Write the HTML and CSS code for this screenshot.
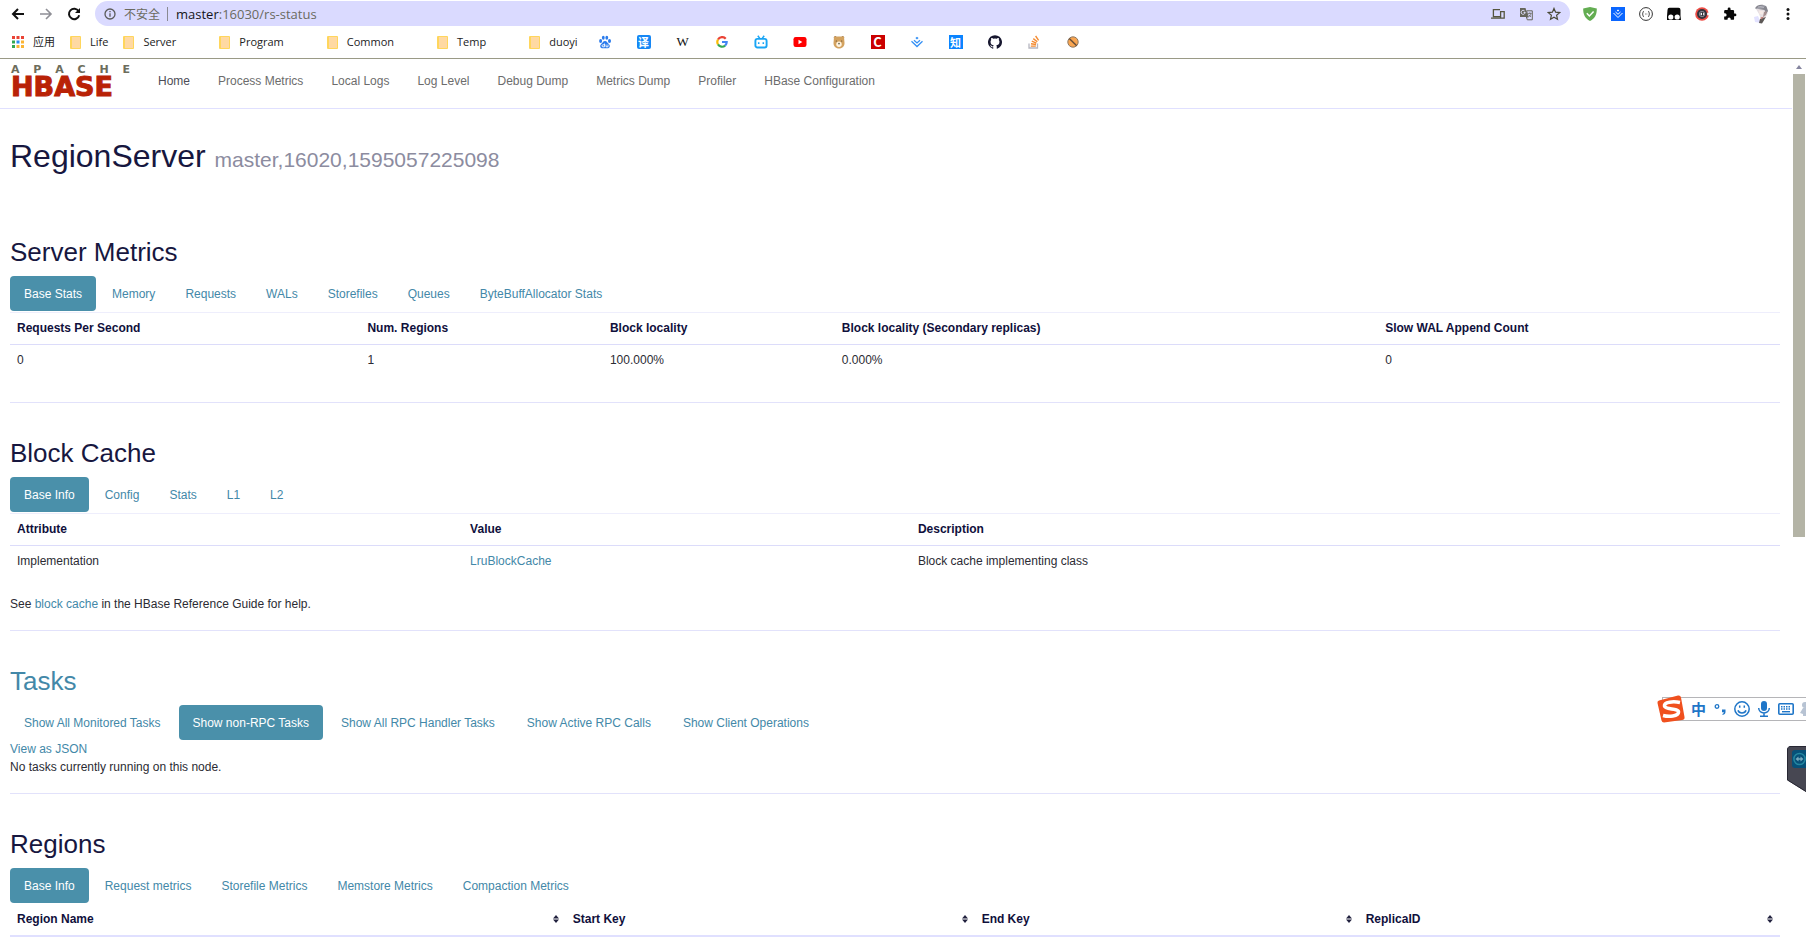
FILE: index.html
```html
<!DOCTYPE html>
<html lang="en">
<head>
<meta charset="utf-8">
<title>HBase Region Server: master</title>
<link rel="stylesheet" href="styles.css">
</head>
<body>
<header class="browser">
  <div class="toolbar">
    <button class="tool" aria-label="Back"><svg width="14" height="14" viewBox="0 0 14 14" fill="none" stroke="#111" stroke-width="2"><path d="M13 7H2M7 2L2 7l5 5"/></svg></button>
    <button class="tool" aria-label="Forward"><svg width="14" height="14" viewBox="0 0 14 14" fill="none" stroke="#8f8f96" stroke-width="1.6"><path d="M1 7h11M7 2l5 5-5 5"/></svg></button>
    <button class="tool" aria-label="Reload"><svg width="14" height="14" viewBox="0 0 14 14" fill="none" stroke="#111" stroke-width="2"><path d="M11.6 4.2A5.2 5.2 0 1 0 12.2 8.3"/><path d="M13 1v5H8z" fill="#111" stroke="none"/></svg></button>
    <div class="address">
      <svg width="12" height="12" viewBox="0 0 12 12" fill="none" stroke="#5b5b5b" stroke-width="1.3"><circle cx="6" cy="6" r="5"/><path d="M6 5.3v3.4M6 3v1.3"/></svg>
      <span class="warning" lang="zh">不安全</span>
      <span class="bar"></span>
      <span class="url"><b class="host">master</b>:16030/rs-status</span>
      <span class="address-tools">
        <svg width="14" height="12" viewBox="0 0 14 12" fill="none" stroke="#55553f" stroke-width="1.3"><path d="M9 1.6H2.4v7H9M0 10.2h9M9.6 3.6h3.6v6.6H9.6z"/></svg>
        <svg width="14" height="14" viewBox="0 0 14 14"><path d="M1 1h5.5l2.6 9H1z" fill="#66665c"/><path d="M7.6 3.8h5.7v9H8.3L7.4 10h1.8z" fill="#dadaff" stroke="#66665c"/><path d="M6.3 5.4H4.6M6.1 5.4A2 2 0 1 1 5.6 4" fill="none" stroke="#e4e4ff"/><path d="M9 6.4h3.6M10.8 5.4v1M12 6.4c-.4 1.7-1.3 2.8-2.4 3.6M9.9 7.7l2 2.3" stroke="#66665c" stroke-width=".8" fill="none"/></svg>
        <svg width="14" height="14" viewBox="0 0 14 14" fill="none" stroke="#4a4a38" stroke-width="1.2"><path d="M7 1.4l1.6 3.8 4.1.4-3.1 2.7.9 4L7 10.2l-3.5 2.1.9-4L1.300 5.600l4.100-.4z"/></svg>
      </span>
    </div>
    <div class="extensions">
      <svg width="14" height="14" viewBox="0 0 14 14"><path d="M7 0l6.800 1.400C14 7 12 11.500 7 14 2 11.500 0 7 .2 1.400z" fill="#63ad52"/><path d="M3.800 6.300l2.600 2.700 4.200-4.500" fill="none" stroke="#fff" stroke-width="1.500"/></svg>
      <svg width="14" height="14" viewBox="0 0 14 14"><path d="M0 0h14v14H0z" fill="#0a66ff"/><path d="M2.500 6L7 10.500 11.500 6M4.500 5L7 7.300 9.500 5" fill="none" stroke="#fff"/><path d="M7 2.600l1.200 1L7 4.600l-1.200-1z" fill="#fff"/></svg>
      <svg width="14" height="14" viewBox="0 0 14 14" fill="none" stroke="#333"><circle cx="7" cy="7" r="6.400"/><path d="M4.800 4.300c-1.200 0-.5 2.200-1.500 2.700 1 .5.300 2.700 1.500 2.700M9.200 4.300c1.200 0 .5 2.200 1.500 2.700-1 .5-.3 2.700-1.500 2.700M6 7h.6M7.600 7h.6"/></svg>
      <svg width="14" height="14" viewBox="0 0 14 14"><path d="M2.500.8h9Q13.500.8 13.500 3v6l.5 4H0V9L.5 3Q.5.800 2.500.8z" fill="#080808"/><circle cx="3.800" cy="10" r="2.600" fill="#fff"/><circle cx="10.200" cy="10" r="2.600" fill="#fff"/></svg>
      <svg width="14" height="14" viewBox="0 0 14 14"><circle cx="7" cy="7" r="6.800" fill="#ed4c45"/><circle cx="7" cy="7" r="5" fill="#33333c"/><circle cx="7" cy="7" r="2.700" fill="#33333c" stroke="#9b9ba6" stroke-width=".8"/><path d="M12.200 5.800H14v2.400h-1.800z" fill="#fff"/><path d="M5 7l2-1.500v3zM8 5.500L9.300 7 8 8.500z" fill="#fff"/></svg>
      <svg width="14" height="14" viewBox="0 0 24 24" fill="#080808"><path d="M20.500 11H19V7a2 2 0 0 0-2-2h-4V3.500a2.500 2.500 0 0 0-5 0V5H4a2 2 0 0 0-2 2v3.800h1.500a2.700 2.700 0 0 1 0 5.400H2V20a2 2 0 0 0 2 2h3.800v-1.500a2.700 2.700 0 0 1 5.400 0V22H17a2 2 0 0 0 2-2v-4h1.500a2.500 2.500 0 0 0 0-5z"/></svg>
      <svg class="avatar" width="16" height="20" viewBox="0 0 16 20"><path d="M2 5c1-3 7-3 10-1 2 2 2 5 1 7l-2 3-4 1-2-5z" fill="#e6dfe2"/><path d="M1 4.500C2 .5 9-.5 12.500 2.500L14 7l-2 3-1.500-4L3 4.800z" fill="#85858e"/><path d="M4 3l7-1.300M3 4.300l7-.8" stroke="#c8c8d2" stroke-width=".7"/><path d="M5 6.500l4.500.7L9 10.500 5.500 10z" fill="#f6eae6"/><path d="M10 8l3-1-1 4-3 2z" fill="#a58f8f"/><path d="M0 13l4-1 3 7-6-1z" fill="#e2e2ff"/><path d="M6 15l6-2-4 6.500L5 19z" fill="#5d5856"/><path d="M6.500 13.500l4-1-3.500 3z" fill="#c07a74"/></svg>
      <svg class="more" width="4" height="14" viewBox="0 0 4 14" fill="#111"><circle cx="2" cy="2.500" r="1.500"/><circle cx="2" cy="7" r="1.500"/><circle cx="2" cy="11.500" r="1.500"/></svg>
    </div>
  </div>
  <nav class="bookmarks" aria-label="Bookmarks">
    <a href="#" class="bookmark"><svg width="12" height="12" viewBox="0 0 12 12"><path d="M0 0h3v3H0zM4.500 0h3v3h-3zM9 0h3v3H9z" fill="#ea4335"/><path d="M0 4.500h3v3H0z" fill="#34a853"/><path d="M4.500 4.500h3v3h-3z" fill="#2b8cf5"/><path d="M9 4.500h3v3H9zM9 9h3v3H9zM4.500 9h3v3h-3z" fill="#fbb535"/><path d="M0 9h3v3H0z" fill="#34a853"/></svg><span lang="zh">应用</span></a>
    <a href="#" class="bookmark"><i class="folder"></i>Life</a>
    <a href="#" class="bookmark spaced"><i class="folder"></i>Server</a>
    <a href="#" class="bookmark spaced"><i class="folder"></i>Program</a>
    <a href="#" class="bookmark spaced"><i class="folder"></i>Common</a>
    <a href="#" class="bookmark spaced"><i class="folder"></i>Temp</a>
    <a href="#" class="bookmark"><i class="folder"></i>duoyi</a>
    <span class="sites">
      <a href="#" aria-label="Baidu"><svg width="14" height="14" viewBox="0 0 14 14" fill="#2b7bec"><ellipse cx="2.600" cy="6" rx="1.500" ry="2"/><ellipse cx="5.300" cy="2.800" rx="1.400" ry="2"/><ellipse cx="8.800" cy="2.800" rx="1.400" ry="2"/><ellipse cx="11.500" cy="6" rx="1.500" ry="2"/><path d="M7 6c2 0 2.500 2 4 3.200 1.600 1.600.7 4-1.500 4-1.600 0-3.400 0-5 0-2.200 0-3-2.400-1.500-4C4.500 8 5 6 7 6z"/><path d="M6.500 8.500v3.300H5a1 1 0 0 1 0-2h1.500M8 9.500v2.300h2V9.500" fill="none" stroke="#fff" stroke-width=".9"/></svg></a>
      <a href="#" aria-label="Translate" class="tile tile-blue"><span lang="zh">译</span></a>
      <a href="#" aria-label="Wikipedia" class="wiki">W</a>
      <a href="#" aria-label="Google"><svg width="12" height="12" viewBox="0 0 12 12" fill="none" stroke-width="2.200"><path d="M9.700 2.700A4.700 4.700 0 0 0 2 3.600" stroke="#ea4335"/><path d="M2 3.600a4.700 4.700 0 0 0 0 4.800" stroke="#fbbc05"/><path d="M2 8.400a4.700 4.700 0 0 0 7.100 1.200" stroke="#34a853"/><path d="M9.100 9.600A4.700 4.700 0 0 0 10.700 6H6" stroke="#4285f4"/></svg></a>
      <a href="#" aria-label="Bilibili"><svg width="14" height="14" viewBox="0 0 14 14" fill="none" stroke="#19a5f5" stroke-width="1.900"><rect x="1.400" y="3.900" width="11.200" height="8.600" rx="2"/><path d="M3.800.8l2 2.600M10.200.8l-2 2.600M4.700 7.200v1.800M9.300 7.200v1.800" stroke-width="1.500"/></svg></a>
      <a href="#" aria-label="YouTube"><svg width="14" height="12" viewBox="0 0 14 12"><rect x=".5" y="1" width="13" height="10" rx="2.200" fill="#f00"/><path d="M5.500 3.800v4.400L9.300 6z" fill="#fff"/></svg></a>
      <a href="#" aria-label="Bear"><svg width="12" height="14" viewBox="0 0 12 14"><circle cx="2.300" cy="2.500" r="1.500" fill="#a77b48"/><circle cx="9.700" cy="2.500" r="1.500" fill="#a77b48"/><path d="M1 2c2-.8 8-.8 10 0l.5 6c0 4-3 5.500-5.500 5.500S.5 12 .5 8z" fill="#d3a25f"/><circle cx="6" cy="9.300" r="2.700" fill="#fff3df"/><circle cx="6" cy="8.600" r=".9" fill="#665"/><circle cx="3.300" cy="6" r=".6" fill="#543"/><circle cx="8.700" cy="6" r=".6" fill="#543"/></svg></a>
      <a href="#" aria-label="CSDN" class="tile tile-red">C</a>
      <a href="#" aria-label="Juejin"><svg width="12" height="12" viewBox="0 0 12 12" fill="none" stroke="#3490f5" stroke-width="1.300"><path d="M.5 5.300L6 10.500l5.500-5.200M3 4.300L6 7l3-2.700"/><path d="M6 .7l1.600 1.300L6 3.400 4.400 2z" fill="#3490f5" stroke="none"/></svg></a>
      <a href="#" aria-label="Zhihu" class="tile tile-square"><span lang="zh">知</span></a>
      <a href="#" aria-label="GitHub"><svg width="14" height="14" viewBox="0 0 16 16" fill="#17172f"><path d="M8 .2a8 8 0 0 0-2.500 15.600c.4.100.5-.2.500-.4v-1.500c-2.200.5-2.700-.9-2.700-.9-.4-.9-.9-1.200-.9-1.200-.7-.5.100-.5.100-.5.800.1 1.200.8 1.200.8.700 1.300 1.900.9 2.300.7.100-.5.300-.9.500-1.100-1.800-.2-3.600-.9-3.600-4 0-.9.300-1.600.8-2.100-.1-.2-.4-1 .1-2.100 0 0 .7-.2 2.200.8a7.600 7.600 0 0 1 4 0c1.500-1 2.200-.8 2.200-.8.500 1.100.2 1.900.1 2.100.5.500.8 1.200.8 2.100 0 3.100-1.900 3.800-3.700 4 .3.200.6.700.6 1.500v2.200c0 .2.100.5.500.4A8 8 0 0 0 8 .2z"/></svg></a>
      <a href="#" aria-label="Stack Overflow"><svg width="12" height="14" viewBox="0 0 12 14" fill="none"><path d="M1 8.500V13h8.500V8.500" stroke="#b6b6c0" stroke-width="1.300"/><path d="M2.800 11.100h5M3 8.800l5 .7M3.800 6.200l4.600 1.900M5.300 3.600l4 3.100M7.600 1l3 4.300" stroke="#f48b31" stroke-width="1.400"/></svg></a>
      <a href="#" aria-label="Blocked"><svg width="12" height="14" viewBox="0 0 12 14"><circle cx="6" cy="7" r="5.200" fill="#f9a550" stroke="#8e7963"/><path d="M2.300 3.400l7.400 7.400" stroke="#654d39" stroke-width="1.400"/></svg></a>
    </span>
  </nav>
</header>

<div class="viewport">
  <div class="page">
    <nav class="navbar">
      <a href="#" class="logo" aria-label="Apache HBase">
        <span class="logo-top"><i>A</i><i>P</i><i>A</i><i>C</i><i>H</i><i>E</i></span>
        <span class="logo-name">HBASE</span>
      </a>
      <a href="#" class="current">Home</a>
      <a href="#">Process Metrics</a>
      <a href="#">Local Logs</a>
      <a href="#">Log Level</a>
      <a href="#">Debug Dump</a>
      <a href="#">Metrics Dump</a>
      <a href="#">Profiler</a>
      <a href="#">HBase Configuration</a>
    </nav>

    <main class="content">
      <h1>RegionServer <small>master,16020,1595057225098</small></h1>

      <section class="metrics">
        <h2>Server Metrics</h2>
        <nav class="tabs">
          <a href="#" class="active">Base Stats</a><a href="#">Memory</a><a href="#">Requests</a><a href="#">WALs</a><a href="#">Storefiles</a><a href="#">Queues</a><a href="#">ByteBuffAllocator Stats</a>
        </nav>
        <table class="server-table">
          <thead><tr><th class="c-requests">Requests Per Second</th><th class="c-regions">Num. Regions</th><th class="c-locality">Block locality</th><th class="c-secondary">Block locality (Secondary replicas)</th><th>Slow WAL Append Count</th></tr></thead>
          <tbody><tr><td>0</td><td>1</td><td>100.000%</td><td>0.000%</td><td>0</td></tr></tbody>
        </table>
      </section>

      <section>
        <h2>Block Cache</h2>
        <nav class="tabs">
          <a href="#" class="active">Base Info</a><a href="#">Config</a><a href="#">Stats</a><a href="#">L1</a><a href="#">L2</a>
        </nav>
        <table>
          <thead><tr><th class="c-attribute">Attribute</th><th class="c-value">Value</th><th>Description</th></tr></thead>
          <tbody><tr><td>Implementation</td><td><a href="#">LruBlockCache</a></td><td>Block cache implementing class</td></tr></tbody>
        </table>
        <p class="help">See <a href="#">block cache</a> in the HBase Reference Guide for help.</p>
      </section>

      <section>
        <h2><a href="#">Tasks</a></h2>
        <nav class="tabs tabs-wide">
          <a href="#">Show All Monitored Tasks</a><a href="#" class="active">Show non-RPC Tasks</a><a href="#">Show All RPC Handler Tasks</a><a href="#">Show Active RPC Calls</a><a href="#">Show Client Operations</a>
        </nav>
        <p><a href="#">View as JSON</a></p>
        <p>No tasks currently running on this node.</p>
      </section>

      <section>
        <h2>Regions</h2>
        <nav class="tabs">
          <a href="#" class="active">Base Info</a><a href="#">Request metrics</a><a href="#">Storefile Metrics</a><a href="#">Memstore Metrics</a><a href="#">Compaction Metrics</a>
        </nav>
        <table class="sortable">
          <thead><tr>
            <th class="c-name"><span class="sort">Region Name<svg width="6" height="8" viewBox="0 0 6 8"><path d="M0 3.400L3 0l3 3.400zM0 4.600h6L3 8z"/></svg></span></th>
            <th class="c-start"><span class="sort">Start Key<svg width="6" height="8" viewBox="0 0 6 8"><path d="M0 3.400L3 0l3 3.400zM0 4.600h6L3 8z"/></svg></span></th>
            <th class="c-end"><span class="sort">End Key<svg width="6" height="8" viewBox="0 0 6 8"><path d="M0 3.400L3 0l3 3.400zM0 4.600h6L3 8z"/></svg></span></th>
            <th><span class="sort">ReplicaID<svg width="6" height="8" viewBox="0 0 6 8"><path d="M0 3.400L3 0l3 3.400zM0 4.600h6L3 8z"/></svg></span></th>
          </tr></thead>
        </table>
      </section>
    </main>
  </div>
  <div class="scrollbar"><span class="scroll-arrow"></span><span class="thumb"></span></div>
</div>

<div class="ime">
  <svg class="ime-logo" width="28" height="28" viewBox="0 0 28 28"><path d="M2 5.500Q0 6 .5 8l4 17.500q.5 2 2.500 2l18-2.500q3-.5 2.500-3L24 2.500Q23.500 0 21 .5z" fill="#f0501e"/><path d="M23 7.500C16 6 7 7 7.500 11c.5 4 14 2 14 6 0 4.500-10 5-15.500 3.500" fill="none" stroke="#fff" stroke-width="3.600"/></svg>
  <span class="ime-mode" lang="zh">中</span>
  <svg width="16" height="16" viewBox="0 0 16 16"><circle cx="5" cy="5.500" r="1.800" fill="none" stroke="#1f76c8" stroke-width="1.300"/><path d="M10 8.500h3.500V11c0 1.500-1 2.500-3 3v-1c1-.5 1.300-1 1.300-1.700H10z" fill="#1f76c8"/></svg>
  <svg width="16" height="16" viewBox="0 0 16 16" fill="none" stroke="#1f76c8" stroke-width="1.500"><circle cx="8" cy="8" r="7.200"/><path d="M5.700 4.500v2.300M10.300 4.500v2.300M4 9.300c1 3.600 7 3.600 8 0"/></svg>
  <svg width="16" height="16" viewBox="0 0 16 16"><rect x="5" y="0" width="6" height="10" rx="3" fill="#1f76c8"/><path d="M2.700 7c0 6.500 10.600 6.500 10.600 0M8 12v3.200M4 15.200h8" fill="none" stroke="#1f76c8" stroke-width="1.500"/></svg>
  <svg width="16" height="16" viewBox="0 0 16 16" fill="none" stroke="#1f76c8"><rect x=".8" y="2.800" width="14.400" height="10.400" rx="1" stroke-width="1.600"/><path d="M3 5.700h10M3 8h10" stroke-width="1.400" stroke-dasharray="1.500 1"/><path d="M4 10.700h8" stroke-width="1.400"/></svg>
  <svg width="16" height="16" viewBox="0 0 16 16" fill="#b7c3d3"><circle cx="5" cy="4" r="3"/><path d="M3 7h8v8H3v-2L0 12z"/></svg>
</div>
<div class="remote">
  <svg width="19" height="46" viewBox="0 0 19 46"><path d="M3 0h16v46L0 34V3z" fill="#474752"/><path d="M19 45.500L.5 34V3Q1 .5 3 .5h16" fill="none" stroke="#272733"/><rect x="5" y="4" width="16" height="18" rx="3" fill="#075078"/><circle cx="12.500" cy="13" r="5.600" fill="none" stroke="#2587a0" stroke-width="1.500"/><path d="M8.500 13l3-2.500v1.700h2v-1.700l3 2.500-3 2.500v-1.700h-2v1.700z" fill="#77a9bd"/></svg>
</div>
</body>
</html>
```
FILE: styles.css
```css
* { box-sizing: border-box; }

body {
  margin: 0;
  height: 100vh;
  overflow: hidden;
  display: flex;
  flex-direction: column;
  background: #fff;
  color: #2b2b33;
  font: 12px/18px "Liberation Sans", Arial, sans-serif;
}

a { color: #4388a8; text-decoration: none; }
svg { display: block; flex: none; }
h1, h2, p { margin: 0; font-weight: 400; }

/* Browser frame */
.browser {
  border-bottom: 1px solid #9a9a86;
  font-family: "Open Sans", "Noto Sans CJK SC", sans-serif;
  color: #222;
}
.toolbar { display: flex; align-items: center; height: 27px; padding-left: 11px; }
.tool {
  display: flex;
  margin: 0 14px 0 0;
  padding: 0;
  border: 0;
  background: none;
}
.address {
  flex: 1;
  display: flex;
  align-items: center;
  height: 25px;
  padding: 0 9px 0 9px;
  border-radius: 13px;
  background: #dadaff;
  color: #6a6a60;
  font-size: 12px;
}
.warning { margin-left: 8px; font-family: "Noto Sans CJK SC", sans-serif; }
.bar { width: 1px; height: 14px; margin: 0 8px 0 7px; background: #8a8a92; }
.url { font-size: 13px; }
.host { color: #151520; font-weight: 400; }
.address-tools { display: flex; align-items: center; gap: 14px; margin-left: auto; }
.extensions { display: flex; align-items: center; gap: 14px; padding: 0 16px 0 13px; }
.avatar { margin-left: 3px; }
.more { margin-left: 2px; }

.bookmarks {
  display: flex;
  align-items: center;
  height: 31px;
  padding: 0 0 1px 12px;
  font-size: 11px;
}
.bookmark {
  display: flex;
  align-items: center;
  gap: 9px;
  margin-right: 15px;
  color: #222;
}
.spaced { margin-right: 43px; }
.folder {
  width: 11px;
  height: 13px;
  border: 1px solid #ffd65c;
  border-left-width: 2px;
  border-radius: 1px;
  background: #ffd9a3;
}
.sites { display: flex; align-items: center; gap: 15px; }
.sites a { display: flex; align-items: center; justify-content: center; width: 24px; height: 14px; }
.sites .tile {
  width: 14px;
  margin: 0 5px;
  color: #fff;
  font: 700 11px/14px "Noto Sans CJK SC", sans-serif;
}
.sites .tile-blue { border-radius: 2px; background: #1687f5; }
.sites .tile-red { background: #cb0000; font-size: 13px; }
.sites .tile-square { background: #0a84ff; }
.sites .wiki { color: #111; font: 13px/14px "Liberation Serif", serif; }

/* Scrolling area */
.viewport { flex: 1; min-height: 0; display: flex; }
.page { flex: 1; min-width: 0; overflow: hidden; }
.scrollbar { width: 14px; padding: 6px 1px 0; }
.scroll-arrow {
  display: block;
  width: 6px;
  margin: 0 auto 5px;
  border: 3px solid transparent;
  border-top: 0;
  border-bottom: 4px solid #85859f;
}
.thumb { display: block; height: 53%; background: #b4b4a6; }

.navbar {
  display: flex;
  align-items: center;
  gap: 28px;
  height: 50px;
  padding: 0 10px 5px 11px;
  border-bottom: 1px solid #e0e0ff;
}
.navbar a { color: #6c6c6c; }
.navbar .current { color: #4d4d57; }
.logo { display: flex; flex-direction: column; gap: 1px; width: 119px; }
.logo-top {
  display: flex;
  justify-content: space-between;
  color: #6d6d5c;
  font: 700 11px/10px "DejaVu Sans", sans-serif;
}
.logo-top i { font-style: normal; }
.navbar .logo-name {
  color: #b92206;
  font: 700 27px/22px "DejaVu Sans", sans-serif;
  -webkit-text-stroke: 1px #b92206;
}

/* Page content */
.content { padding: 29px 12px 0 10px; }
h1 { color: #17173f; font-size: 32px; line-height: 36px; }
h1 small { color: #8c8c9f; font-size: 21px; line-height: 1; }
h2 { margin-bottom: 8px; color: #17173f; font-size: 26px; line-height: 31px; }

section { padding-top: 35px; }
section + section { margin-top: 17px; border-top: 1px solid #e2e2fb; }
.metrics { padding-top: 63px; padding-bottom: 9px; }

.tabs { display: flex; gap: 2px; }
.tabs-wide { gap: 4px; }
.tabs a { padding: 9px 14px 8px; border-radius: 4px; }
.tabs .active { background: #4a90aa; color: #fff; }

table { width: 100%; margin-top: 1px; border-spacing: 0; table-layout: fixed; }
th, td { padding: 6px 7px 7px; border-top: 1px solid #dcdcfa; text-align: left; }
th { color: #10103c; border-top-color: #eeeefc; }
.sortable th { border-top: 0; border-bottom: 2px solid #e0e0ff; }
.c-requests { width: 19.800%; }
.c-regions { width: 13.700%; }
.c-locality { width: 13.100%; }
.c-secondary { width: 30.700%; }
.c-attribute { width: 25.600%; }
.c-value { width: 25.300%; }
.c-name { width: 31.400%; }
.c-start { width: 23.100%; }
.c-end { width: 21.700%; }
.sort { display: flex; align-items: center; justify-content: space-between; }
.sort svg { fill: #22223f; }
.help { margin-top: 18px; }

/* Floating desktop widgets */
.ime {
  position: fixed;
  top: 697px;
  right: 0;
  display: flex;
  align-items: center;
  gap: 6px;
  width: 144px;
  height: 24px;
  border: 1px solid #b5b5b8;
  border-right: 0;
  background: #fff;
  clip-path: inset(-6px 0 -6px -6px);
}
.ime-logo { margin-left: -6px; }
.ime-mode {
  width: 16px;
  color: #1f76c8;
  font: 700 15px/16px "Noto Sans CJK SC", sans-serif;
}
.remote { position: fixed; top: 746px; right: 0; }
```
